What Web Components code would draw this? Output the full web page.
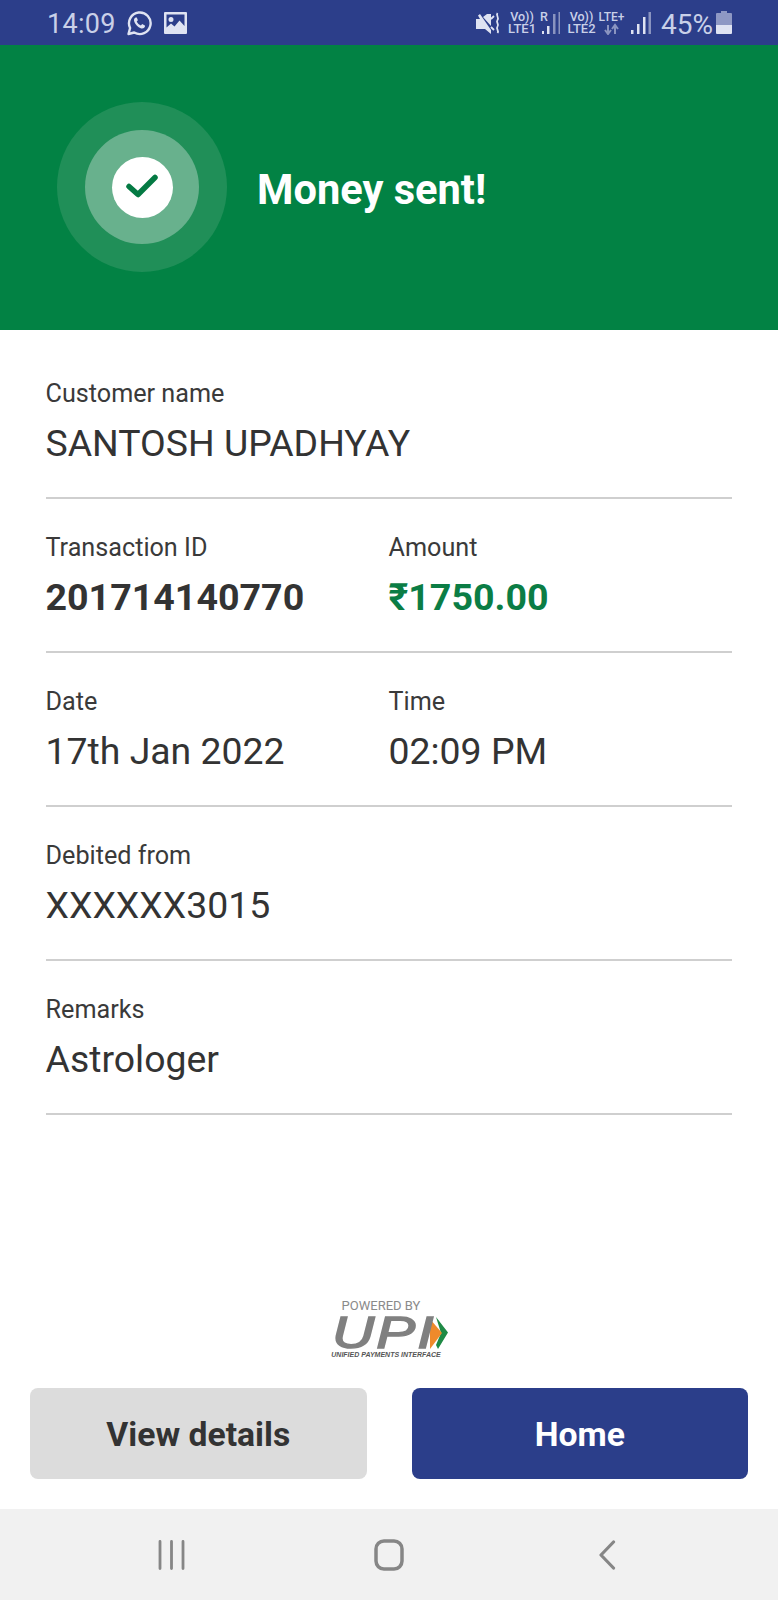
<!DOCTYPE html>
<html lang="en">
<head>
<meta charset="utf-8">
<title>Money sent</title>
<style>
  html, body { margin: 0; height: 100%; background: #fff; }
  body { font-family: Roboto, "Noto Sans", sans-serif; color: #333; }
  payment-receipt { height: 1600px; }
</style>
</head>
<body>
<payment-receipt>
  <status-bar slot="top"></status-bar>
  <success-banner slot="top">Money sent!</success-banner>
  <detail-row><detail-field label="Customer name" value="SANTOSH UPADHYAY"></detail-field></detail-row>
  <detail-row>
    <detail-field label="Transaction ID" value="201714140770" tone="bold"></detail-field>
    <detail-field label="Amount" value="₹1750.00" tone="money"></detail-field>
  </detail-row>
  <detail-row>
    <detail-field label="Date" value="17th Jan 2022"></detail-field>
    <detail-field label="Time" value="02:09 PM"></detail-field>
  </detail-row>
  <detail-row><detail-field label="Debited from" value="XXXXXX3015"></detail-field></detail-row>
  <detail-row><detail-field label="Remarks" value="Astrologer"></detail-field></detail-row>
  <upi-badge slot="bottom"></upi-badge>
  <action-bar slot="bottom">
    <action-button>View details</action-button>
    <action-button primary>Home</action-button>
  </action-bar>
  <nav-bar slot="bottom"></nav-bar>
</payment-receipt>

<script>
class PaymentReceipt extends HTMLElement {
  connectedCallback() {
    this.attachShadow({ mode: 'open' });
    this.shadowRoot.innerHTML = `
      <style>
        :host { display: flex; flex-direction: column; }
        .details { flex: 1; padding: 15px 46px 0; }
      </style>
      <slot name="top"></slot>
      <div class="details"><slot></slot></div>
      <slot name="bottom"></slot>
    `;
  }
}

class StatusBar extends HTMLElement {
  connectedCallback() {
    this.attachShadow({ mode: 'open' });
    this.shadowRoot.innerHTML = `
      <style>
        :host {
          display: flex; align-items: center; height: 45px; padding: 0 46px 0 47px;
          box-sizing: border-box; background: #2c3e8a; color: #c9d0e8;
        }
        svg { display: block; flex: none; }
        .time { font-size: 27px; line-height: 45px; letter-spacing: .3px; margin-right: 10px; padding-top: 3px; }
        .spacer { flex: 1; }
        .stack { display: flex; flex-direction: column; flex: none; font-size: 12.5px; font-weight: 500; line-height: 12px; align-items: center; white-space: nowrap; }
        .stack .low { font-size: 13px; }
        .pct { font-size: 28px; line-height: 45px; width: 51px; padding-top: 3px; margin: 0 4px 0 10px; white-space: nowrap; }
      </style>
      <span class="time">14:09</span>
      <svg width="26" height="26" viewBox="0 0 26 26" style="margin-right:12px">
        <path d="M2.500 24l1.600-6A10.800 10.800 0 1 1 8.200 22.500z" fill="none" stroke="#dfe3f2" stroke-width="2.400" stroke-linejoin="round"/>
        <path d="M9.600 7.500c-1.600.8-2 2.500-1.200 4.500 1.200 3 3.500 5.200 6.300 6.200 2 .7 3.700-.1 4.300-1.700l-.1-1-2.700-1.400-1.300 1.500c-1.900-.8-3.300-2.200-4.200-4l1.200-1.400-1.100-2.700z" fill="#dfe3f2"/>
      </svg>
      <svg width="23" height="22" viewBox="0 0 23 22">
        <path fill="#dfe3f2" fill-rule="evenodd" d="M1 0h21a1 1 0 0 1 1 1v20a1 1 0 0 1-1 1H1a1 1 0 0 1-1-1V1a1 1 0 0 1 1-1zM2.500 2.500v13l4.500-4 3.500 3 5-6 5 5.500v-11.500zM7 5a2.500 2.500 0 1 1 0 5 2.500 2.500 0 0 1 0-5z"/>
      </svg>
      <span class="spacer"></span>
      <svg width="24" height="24" viewBox="0 0 24 24" style="margin-right:8px">
        <path fill="#dfe3f2" d="M0 8h4L2 4.500 4 3l11 16v4l-6-5H0zM7 6l4-3h4v12z"/>
        <path d="M18 5l-3 3M18 19l-3-3M21.500 2c-2 2.500 2 4.500 0 7s2 4 0 6.500 2 4 0 6.500" fill="none" stroke="#dfe3f2" stroke-width="1.800"/>
      </svg>
      <span class="stack" style="width:28px"><span>Vo))</span><span class="low">LTE1</span></span>
      <span class="stack" style="margin-left:4px;width:12px;align-items:flex-start"><span>R</span>
        <svg width="12" height="11" viewBox="0 0 12 11"><path fill="#dfe3f2" d="M2 8h2v3H2zM7 3h2.500v8H7z"/></svg>
      </span>
      <svg width="8" height="22" viewBox="0 0 8 22"><path fill="#8a94c0" d="M1 2h2.500v20H1zM6.500 0H8v22H6.500z"/></svg>
      <span class="stack" style="margin-left:7px;width:29px"><span>Vo))</span><span class="low">LTE2</span></span>
      <span class="stack" style="margin-left:2px;width:27px"><span style="font-size:12px">LTE+</span>
        <svg width="15" height="12" viewBox="0 0 15 12"><path fill="none" stroke="#8a94c0" stroke-width="2" d="M4 2v9M1 7l3 4 3-4M11 11V3M8 6l3-4 3 4"/></svg>
      </span>
      <svg width="21" height="22" viewBox="0 0 21 22" style="margin-left:5px"><path fill="#dfe3f2" d="M1 18h2.500v4H1zM7 12h2.500v10H7zM13 5h2.500v17H13z"/><path fill="#8a94c0" d="M18.500 0H21v22h-2.500z"/></svg>
      <span class="pct">45%</span>
      <svg width="16" height="23" viewBox="0 0 16 23"><path fill="#8e98c4" d="M5 0h6v2h4a1 1 0 0 1 1 1v12H0V3a1 1 0 0 1 1-1h4z"/><path fill="#dfe3f2" d="M0 14h16v8a1 1 0 0 1-1 1H1a1 1 0 0 1-1-1z"/></svg>
    `;
  }
}

class SuccessBanner extends HTMLElement {
  connectedCallback() {
    this.attachShadow({ mode: 'open' });
    this.shadowRoot.innerHTML = `
      <style>
        :host {
          display: flex; align-items: center; gap: 30px; height: 285px; padding: 0 0 0 57px;
          box-sizing: border-box; background: #028244; color: #fff;
        }
        .ring { display: grid; place-items: center; border-radius: 50%; }
        .outer { width: 170px; height: 170px; background: #208f58; margin-top: -1px; }
        .middle { width: 114px; height: 114px; background: #68b18d; }
        .inner { width: 61px; height: 61px; background: #fff; }
        .title { font-size: 41.600px; font-weight: 700; line-height: 50px; margin-top: 4px; }
      </style>
      <div class="ring outer"><div class="ring middle"><div class="ring inner">
        <svg width="34" height="26" viewBox="0 0 34 26"><path d="M4 12.500l9 8 17-17" fill="none" stroke="#047a43" stroke-width="5.500" stroke-linecap="round" stroke-linejoin="round"/></svg>
      </div></div></div>
      <div class="title"><slot></slot></div>
    `;
  }
}

class DetailRow extends HTMLElement {
  connectedCallback() {
    this.attachShadow({ mode: 'open' });
    this.shadowRoot.innerHTML = `
      <style>
        :host {
          display: grid; grid-template-columns: 343px 1fr; height: 154px; box-sizing: border-box;
          padding-top: 34px; border-bottom: 2px solid #cfcfcf;
        }
      </style>
      <slot></slot>
    `;
  }
}

class DetailField extends HTMLElement {
  connectedCallback() {
    const tone = this.getAttribute('tone') || 'plain';
    this.attachShadow({ mode: 'open' });
    this.shadowRoot.innerHTML = `
      <style>
        :host { display: block; white-space: nowrap; margin-left: -.5px; }
        .label { font-size: 25.200px; line-height: 30px; color: #3a3a3a; }
        .value { font-size: 37.400px; line-height: 50px; margin-top: 9px; color: #333; }
        .bold { font-weight: 700; font-size: 37.600px; }
        .money { font-weight: 700; font-size: 37.600px; color: #0b7d45; }
      </style>
      <div class="label">${this.getAttribute('label')}</div>
      <div class="value ${tone}">${this.getAttribute('value')}</div>
    `;
  }
}

class UpiBadge extends HTMLElement {
  connectedCallback() {
    this.attachShadow({ mode: 'open' });
    this.shadowRoot.innerHTML = `
      <style>
        :host { display: flex; flex-direction: column; align-items: center; }
        .powered { font-size: 13px; line-height: 16px; color: #8a8a8a; margin: 0 16px 2px 0; }
        .logo { display: flex; align-items: center; height: 34px; margin-left: 2px; }
        .upi {
          display: inline-block; font: italic 400 45px/34px "Liberation Sans", sans-serif; color: #808080;
          -webkit-text-stroke: 1.500px #808080; letter-spacing: 1.500px;
          transform: scaleX(1.3); transform-origin: left center; width: 102px;
        }
        .tag { font: italic 700 7px/9px "Liberation Sans", sans-serif; color: #555; margin-right: 6px; }
      </style>
      <div class="powered">POWERED BY</div>
      <div class="logo">
        <span class="upi">UPI</span>
        <svg width="18" height="32" viewBox="0 0 18 32" style="margin-left:-4px">
          <path fill="#1f8a45" d="M6 0l12 15.500L8 32l-2-4 5-12z"/>
          <path fill="#ef8a2b" d="M0 2l12 14L0 32z"/>
        </svg>
      </div>
      <div class="tag">UNIFIED PAYMENTS INTERFACE</div>
    `;
  }
}

class ActionBar extends HTMLElement {
  connectedCallback() {
    this.attachShadow({ mode: 'open' });
    this.shadowRoot.innerHTML = `
      <style>
        :host { display: grid; grid-template-columns: 1fr 1fr; gap: 45px; padding: 29px 30px 30px; }
      </style>
      <slot></slot>
    `;
  }
}

class ActionButton extends HTMLElement {
  connectedCallback() {
    this.attachShadow({ mode: 'open' });
    this.shadowRoot.innerHTML = `
      <style>
        :host {
          display: flex; align-items: center; justify-content: center; height: 91px; border-radius: 8px;
          box-sizing: border-box; padding-top: 2px;
          background: #dcdcdc; color: #333; font-size: 33.700px; font-weight: 700;
        }
        :host([primary]) { background: #2b3e8a; color: #fff; }
      </style>
      <slot></slot>
    `;
  }
}

class NavBar extends HTMLElement {
  connectedCallback() {
    this.attachShadow({ mode: 'open' });
    this.shadowRoot.innerHTML = `
      <style>
        :host {
          display: grid; grid-template-columns: repeat(3, 1fr); height: 91px;
          background: #f1f1f1; align-items: center; justify-items: center;
        }
        svg { display: block; }
      </style>
      <svg width="28" height="30" viewBox="0 0 28 30" style="margin-left:84px"><path d="M2 1.500v27M13.500 1.500v27M25 1.500v27" fill="none" stroke="#868686" stroke-width="2.800" stroke-linecap="round"/></svg>
      <svg width="30" height="32" viewBox="0 0 30 32"><rect x="2" y="2" width="26" height="28" rx="8" fill="none" stroke="#868686" stroke-width="3.500"/></svg>
      <svg width="18" height="30" viewBox="0 0 18 30" style="margin-right:82px"><path d="M15.500 2L3 15l12.500 13" fill="none" stroke="#868686" stroke-width="3.200" stroke-linecap="round" stroke-linejoin="round"/></svg>
    `;
  }
}

customElements.define('payment-receipt', PaymentReceipt);
customElements.define('status-bar', StatusBar);
customElements.define('success-banner', SuccessBanner);
customElements.define('detail-row', DetailRow);
customElements.define('detail-field', DetailField);
customElements.define('upi-badge', UpiBadge);
customElements.define('action-bar', ActionBar);
customElements.define('action-button', ActionButton);
customElements.define('nav-bar', NavBar);
</script>
</body>
</html>
